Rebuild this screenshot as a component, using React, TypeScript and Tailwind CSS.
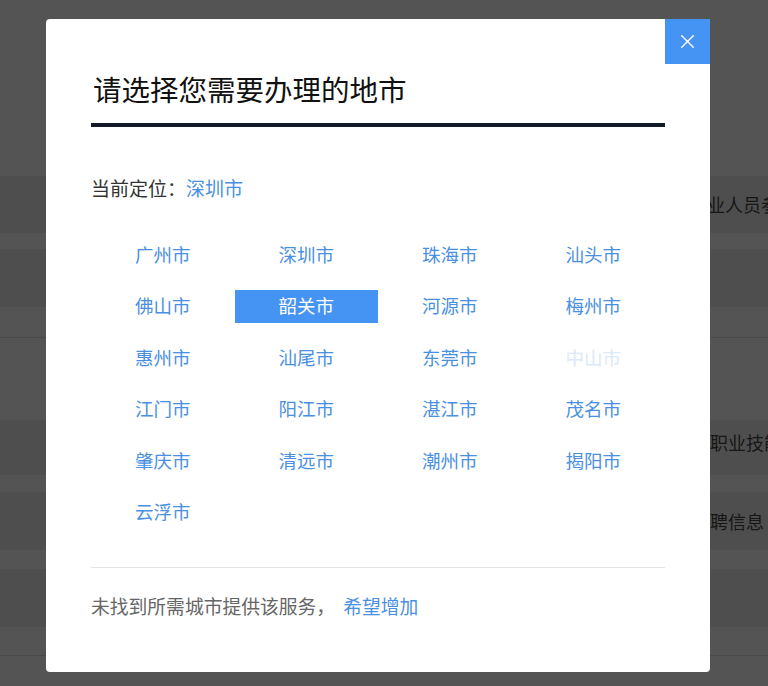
import { X } from 'lucide-react'

const CITIES = [
  '广州市', '深圳市', '珠海市', '汕头市',
  '佛山市', '韶关市', '河源市', '梅州市',
  '惠州市', '汕尾市', '东莞市', '中山市',
  '江门市', '阳江市', '湛江市', '茂名市',
  '肇庆市', '清远市', '潮州市', '揭阳市',
  '云浮市',
]

const SELECTED = '韶关市'
const DISABLED = ['中山市']

// page behind the dimmed overlay, already painted in its dimmed colours
function Backdrop() {
  return (
    <div className="flex flex-col bg-[#545454] text-[18px] text-[#161616]">
      <div className="h-[176px]" />
      <div className="h-[57px] bg-[#4e4e4e] flex items-center whitespace-nowrap overflow-hidden pl-[689px]">
        从业人员参保
      </div>
      <div className="h-[16px]" />
      <div className="h-[58px] bg-[#4e4e4e]" />
      <div className="h-[30px]" />
      <div className="h-px bg-[#4a4a4a]" />
      <div className="h-[82px]" />
      <div className="h-[55px] bg-[#4e4e4e] flex items-center whitespace-nowrap overflow-hidden pl-[710px] pb-[10px]">
        职业技能鉴定
      </div>
      <div className="h-[17px]" />
      <div className="h-[58px] bg-[#4e4e4e] flex items-center whitespace-nowrap overflow-hidden pl-[692px]">
        招聘信息
      </div>
      <div className="h-[19px]" />
      <div className="h-[58px] bg-[#4e4e4e]" />
      <div className="h-[28px]" />
      <div className="h-px bg-[#4a4a4a]" />
      <div className="h-[30px]" />
    </div>
  )
}

export default function App() {
  return (
    <div
      className="relative w-[768px] h-[686px] overflow-hidden"
      style={{ fontFamily: '"Microsoft YaHei", "Noto Sans CJK SC", "Noto Sans", sans-serif' }}
    >
      <Backdrop />

      <div className="absolute left-[46px] top-[19px] w-[664px] h-[653px] bg-white rounded-[4px] px-[45px] pt-[50px]">
        <button className="absolute top-0 right-0 w-[45px] h-[45px] bg-[#4593f2] flex items-center justify-center text-white">
          <X size={23} strokeWidth={1.4} />
        </button>

        <h2 className="text-[28.5px] leading-[40px] text-[#111] font-normal pl-[2px]">请选择您需要办理的地市</h2>
        <div className="mt-[14px] h-[4px] bg-[#121a26]" />

        <div className="mt-[49px] h-[24px] flex items-center text-[19px] text-[#333]">
          当前定位：<span className="text-[#4a90e2]">深圳市</span>
        </div>

        <div className="mt-[38px] grid grid-cols-4 gap-y-[18.5px]">
          {CITIES.map((city) => {
            const selected = city === SELECTED
            const disabled = DISABLED.includes(city)
            return (
              <div
                key={city}
                className={`h-[33px] flex items-center justify-center text-[18.5px] ${
                  selected ? 'bg-[#4593f2] text-white' : disabled ? 'text-[#dce9f8]' : 'text-[#4a90e2]'
                }`}
              >
                {city}
              </div>
            )
          })}
        </div>

        <div className="mt-[38px] h-px bg-[#e3e3e3]" />

        <div className="mt-[27px] h-[24px] flex items-center text-[18.8px] text-[#666]">
          未找到所需城市提供该服务，
          <span className="ml-[8px] text-[#4a90e2]">希望增加</span>
        </div>
      </div>
    </div>
  )
}
